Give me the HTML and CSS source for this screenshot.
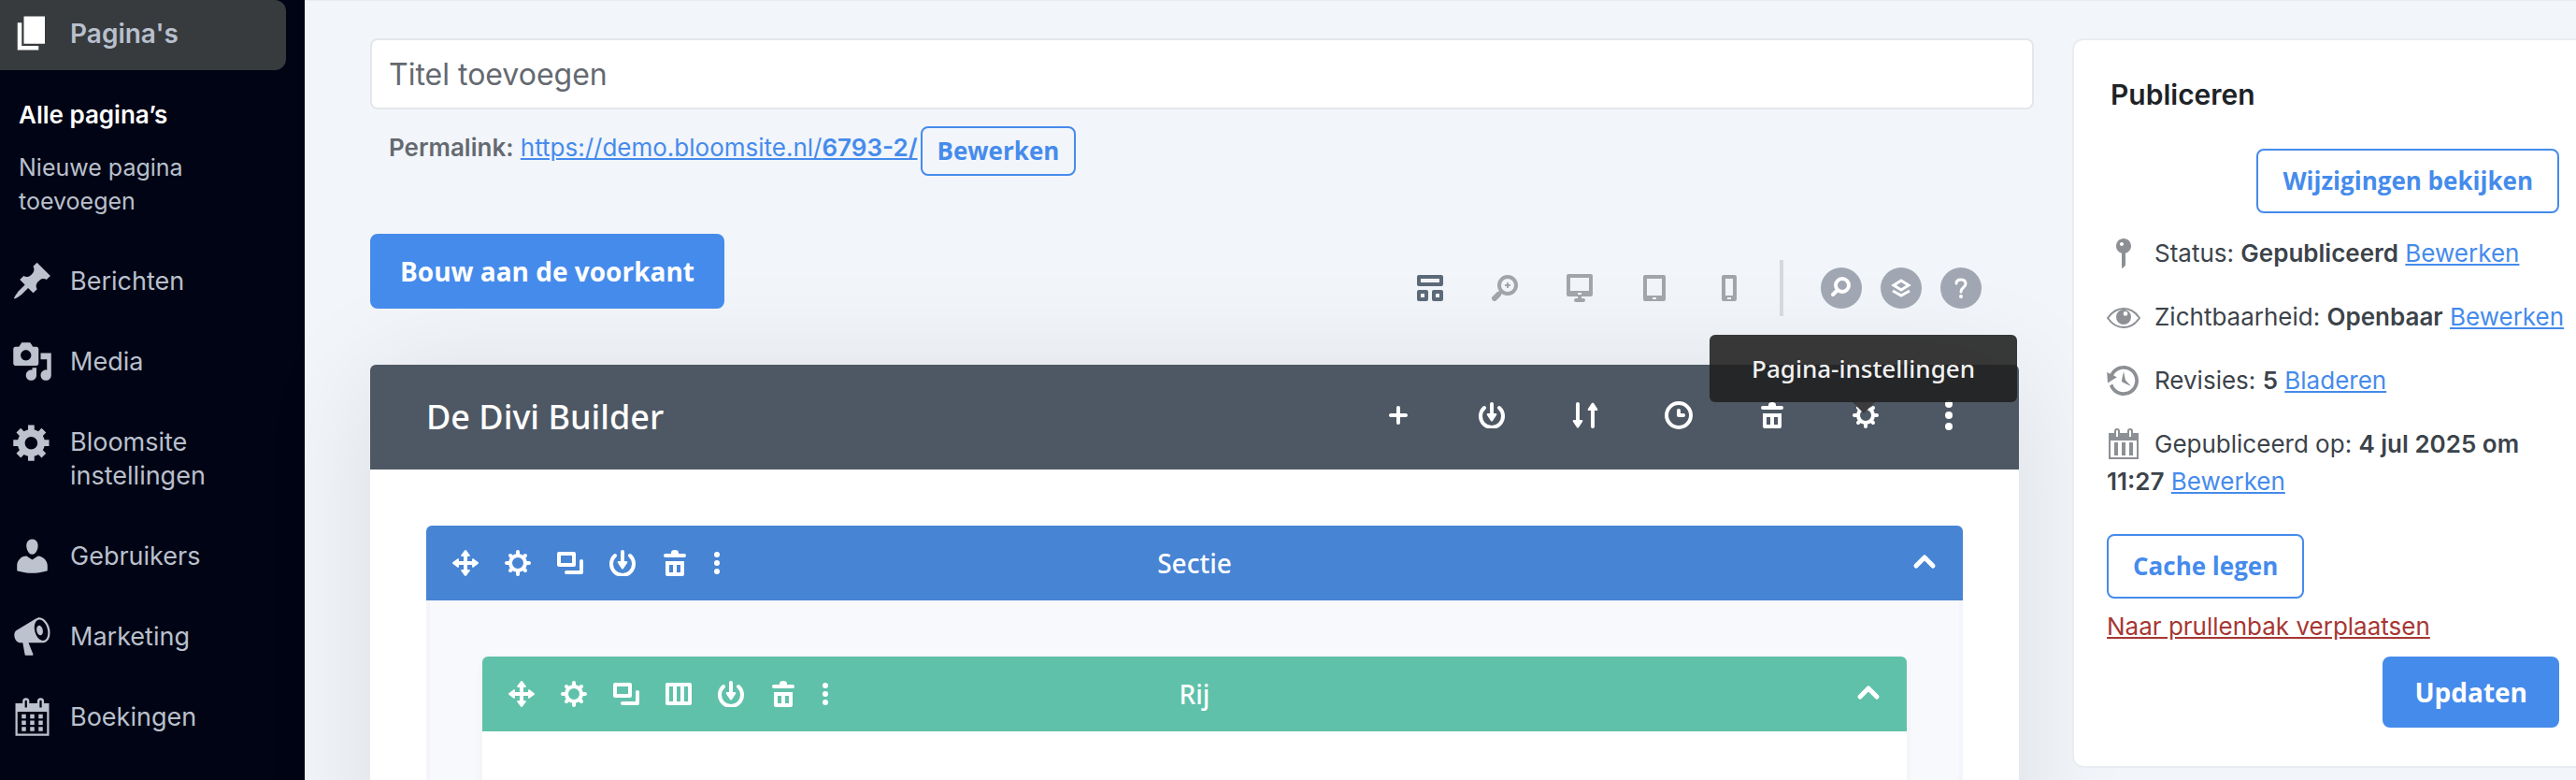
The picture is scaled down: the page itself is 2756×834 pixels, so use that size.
FILE: index.html
```
<!DOCTYPE html>
<html lang="nl">
<head>
    <meta charset="UTF-8">
    <meta name="viewport" content="width=device-width, initial-scale=1.0">
    <title>Pagina bewerken</title>
    <link rel="stylesheet" href="styles.css">
</head>
<body>
    <!-- Shared builder icons -->
    <svg class="sprite" aria-hidden="true">
        <symbol id="icon-move" viewBox="0 0 28 28">
            <path d="M14 5v18M5 14h18" fill="none" stroke="currentColor" stroke-width="4"/>
            <path d="M14 0q1 0 2 2l3 4q0 1-2 1h-6q-2 0-2-1l3-4q1-2 2-2zM14 28q1 0 2-2l3-4q0-1-2-1h-6q-2 0-2 1l3 4q1 2 2 2zM0 14q0-1 2-2l4-3q1 0 1 2v6q0 2-1 2l-4-3q-2-1-2-2zM28 14q0-1-2-2l-4-3q-1 0-1 2v6q0 2 1 2l4-3q2-1 2-2z" fill="currentColor"/>
        </symbol>
        <symbol id="icon-gear" viewBox="0 0 28 28">
            <g fill="none" stroke="currentColor" stroke-linecap="round">
                <circle cx="14" cy="14" r="8" stroke-width="4"/>
                <path d="M14 2v3M14 23v3M2 14h3M23 14h3M6 6l2 2M20 20l2 2M22 6l-2 2M8 20l-2 2" stroke-width="4"/>
            </g>
        </symbol>
        <symbol id="icon-copy" viewBox="0 0 28 28">
            <g fill="none" stroke="currentColor" stroke-width="4" stroke-linejoin="round" stroke-linecap="round">
                <path d="M2 4h16v12H2z"/>
                <path d="M26 12v12H10"/>
            </g>
        </symbol>
        <symbol id="icon-columns" viewBox="0 0 28 28">
            <path fill="currentColor" fill-rule="evenodd" d="M2 2h24q2 0 2 2v20q0 2-2 2H2q-2 0-2-2V4q0-2 2-2zM4 6v16h4V6zM12 6v16h4V6zM20 6v16h4V6z"/>
        </symbol>
        <symbol id="icon-save" viewBox="0 0 28 28">
            <path d="M6 6A12 12 0 1 0 22 6M14 2v11" fill="none" stroke="currentColor" stroke-width="4" stroke-linecap="round"/>
            <path d="M10 12h8q2 0 1 2l-4 6q-1 1-2 0l-4-6q-1-2 1-2z" fill="currentColor"/>
        </symbol>
        <symbol id="icon-trash" viewBox="0 0 28 28">
            <path fill="currentColor" d="M10 4V3q0-3 4-3t4 3v1h6q2 0 2 2t-2 2H4Q2 8 2 6t2-2z"/>
            <path fill="currentColor" fill-rule="evenodd" d="M4 12h20v14q0 2-2 2H6q-2 0-2-2zM8 16v8h4v-8zM16 16v8h4v-8z"/>
        </symbol>
        <symbol id="icon-dots" viewBox="0 0 8 32">
            <g fill="currentColor">
                <circle cx="4" cy="4" r="4"/>
                <circle cx="4" cy="16" r="4"/>
                <circle cx="4" cy="28" r="4"/>
            </g>
        </symbol>
        <symbol id="icon-up" viewBox="0 0 28 28">
            <path d="M6 17l9-9 9 9" fill="none" stroke="currentColor" stroke-width="5" stroke-linecap="round" stroke-linejoin="round"/>
        </symbol>
    </svg>

    <nav class="sidebar">
        <a class="menu-item active" href="#">
            <svg class="menu-icon" viewBox="0 0 20 20"><path d="M6 15V2h10v13H6zm-1 1h8v2H3V5h2v11z"/></svg>
            <span>Pagina's</span>
        </a>
        <div class="submenu">
            <a class="current" href="#">Alle pagina’s</a>
            <a href="#">Nieuwe pagina toevoegen</a>
        </div>
        <a class="menu-item" href="#">
            <svg class="menu-icon" viewBox="0 0 20 20"><path d="M10.44 3.02l1.82-1.82 6.36 6.35-1.83 1.82c-1.05-.68-2.48-.57-3.41.36l-.75.75c-.92.93-1.04 2.35-.35 3.41l-1.83 1.82-2.41-2.41-2.8 2.79c-.42.42-3.38 2.71-3.8 2.29s1.86-3.39 2.28-3.81l2.79-2.79L4.1 9.36l1.83-1.82c1.05.69 2.48.57 3.4-.36l.75-.75c.93-.92 1.05-2.35.36-3.41z"/></svg>
            <span>Berichten</span>
        </a>
        <a class="menu-item" href="#">
            <svg class="menu-icon" viewBox="0 0 20 20"><path d="M13 11V4c0-.55-.45-1-1-1h-1.67L9 1H5L3.67 3H2c-.55 0-1 .45-1 1v7c0 .55.45 1 1 1h10c.55 0 1-.45 1-1zM7 4.5c1.38 0 2.5 1.12 2.5 2.5S8.38 9.5 7 9.5 4.5 8.38 4.5 7 5.62 4.5 7 4.5zM14 6h5v10.5c0 1.38-1.12 2.5-2.5 2.5S14 17.88 14 16.5s1.12-2.5 2.5-2.5c.17 0 .34.02.5.05V9h-3V6zm-4 8.05V13h2v3.5c0 1.38-1.12 2.5-2.5 2.5S7 17.88 7 16.5 8.12 14 9.5 14c.17 0 .34.02.5.05z"/></svg>
            <span>Media</span>
        </a>
        <a class="menu-item" href="#">
            <svg class="menu-icon" viewBox="0 0 20 20"><path d="M18 12h-2.18c-.17.7-.44 1.35-.81 1.93l1.54 1.54-2.1 2.1-1.54-1.54c-.58.36-1.23.63-1.91.79V19H8v-2.18c-.68-.16-1.33-.43-1.91-.79l-1.54 1.54-2.12-2.12 1.54-1.54c-.36-.58-.63-1.23-.79-1.91H1V9.03h2.17c.16-.7.44-1.35.8-1.94L2.43 5.55l2.1-2.1 1.54 1.54c.58-.37 1.24-.64 1.93-.81V2h3v2.18c.68.16 1.33.43 1.91.79l1.54-1.54 2.12 2.12-1.54 1.54c.36.59.64 1.24.8 1.94H18V12zm-8.5 1.5c1.66 0 3-1.34 3-3s-1.34-3-3-3-3 1.34-3 3 1.34 3 3 3z"/></svg>
            <span>Bloomsite instellingen</span>
        </a>
        <a class="menu-item" href="#">
            <svg class="menu-icon" viewBox="0 0 20 20"><path d="M10 9.25c-2.27 0-2.73-3.44-2.73-3.44C7 4.02 7.82 2 9.97 2c2.16 0 2.98 2.02 2.71 3.81 0 0-.41 3.44-2.68 3.44zm0 2.57L12.72 10c2.39 0 4.52 2.33 4.52 4.53v2.49s-3.65 1.13-7.24 1.13c-3.65 0-7.24-1.13-7.24-1.13v-2.49c0-2.25 1.94-4.48 4.47-4.48z"/></svg>
            <span>Gebruikers</span>
        </a>
        <a class="menu-item" href="#">
            <svg class="menu-icon" viewBox="0 0 20 20"><path d="M18.15 5.94c.46 1.62.38 3.22-.02 4.48-.42 1.28-1.26 2.18-2.3 2.48-.16.06-.26.06-.4.06-.06.02-.12.02-.18.02-.06.02-.14.02-.22.02h-6.8l2.22 5.5c.02.14-.06.26-.14.34-.08.1-.24.16-.34.16H6.95c-.1 0-.26-.06-.34-.16-.08-.08-.16-.2-.14-.34l-1-5.5H4.25l-.02-.02c-.5.06-1.08-.18-1.54-.62s-.88-1.08-1.06-1.88c-.24-.8-.2-1.56-.02-2.2.18-.62.58-1.08 1.06-1.3l.02-.02 9-5.4c.1-.06.18-.1.24-.16.06-.04.14-.08.24-.12.16-.08.28-.12.5-.18 1.04-.3 2.24.1 3.22.98s1.84 2.24 2.26 3.86zm-2.58 5.98h-.02c.4-.1.74-.34 1.04-.7.58-.7.86-1.76.86-3.04 0-.64-.1-1.3-.28-1.98-.34-1.36-1.02-2.5-1.78-3.24s-1.68-1.1-2.46-.88c-.82.22-1.4.96-1.7 2-.32 1.04-.28 2.36.06 3.72.38 1.36 1 2.5 1.8 3.24.78.74 1.62 1.1 2.48.88zm-2.54-7.08c.22-.04.42-.02.62.04.38.16.76.48 1.02 1s.42 1.2.42 1.78c0 .3-.04.56-.12.8-.18.48-.44.84-.86.94-.34.1-.8-.06-1.14-.4s-.64-.86-.78-1.5c-.18-.62-.12-1.24.02-1.72s.48-.84.82-.94z"/></svg>
            <span>Marketing</span>
        </a>
        <a class="menu-item" href="#">
            <svg class="menu-icon" viewBox="0 0 20 20"><path fill-rule="evenodd" d="M2 3.5h3.4V2.6a1.6 1.6 0 0 1 3.2 0v.9h3.8V2.6a1.6 1.6 0 0 1 3.2 0v.9H18V19H2zM6.5 2.6v3h1v-3a.5.5 0 0 0-1 0zM13.5 2.6v3h1v-3a.5.5 0 0 0-1 0zM3 7.5V18h14V7.5z"/><path d="M5 8.8h2v2H5zM9 8.8h2v2H9zM13 8.8h2v2h-2zM5 11.8h2v2H5zM9 11.8h2v2H9zM13 11.8h2v2h-2zM5 14.8h2v2H5zM9 14.8h2v2H9zM13 14.8h2v2h-2z"/></svg>
            <span>Boekingen</span>
        </a>
    </nav>

    <main class="content">
        <div class="editor">
            <input class="title-input" type="text" aria-label="Titel toevoegen" placeholder="Titel toevoegen">

            <div class="permalink">
                <div class="permalink-text"><strong>Permalink:</strong> <a href="#">https://demo.bloomsite.nl/<strong>6793-2/</strong></a></div>
                <button class="button small" type="button">Bewerken</button>
            </div>

            <div class="toolbar">
                <button class="button primary large" type="button">Bouw aan de voorkant</button>
                <div class="tools">
                    <div class="views">
                        <button class="icon-button selected" type="button" aria-label="Wireframe">
                            <svg width="28" height="28" viewBox="0 0 28 28"><g fill="none" stroke="currentColor" stroke-width="4" stroke-linejoin="round"><path d="M2 2h24v8H2zM2 18h8v8H2zM18 18h8v8h-8z"/></g></svg>
                        </button>
                        <button class="icon-button" type="button" aria-label="Zoomen">
                            <svg width="28" height="28" viewBox="0 0 28 28"><g fill="none" stroke="currentColor"><circle cx="17" cy="11" r="9" stroke-width="4"/><path d="M10 18l-2 2" stroke-width="4"/><path d="M7 21l-4 4" stroke-width="6" stroke-linecap="round"/><path d="M17 8v6M14 11h6" stroke-width="2"/></g></svg>
                        </button>
                        <button class="icon-button" type="button" aria-label="Desktop">
                            <svg width="28" height="30" viewBox="0 0 28 30"><path fill="currentColor" fill-rule="evenodd" d="M2 0h24q2 0 2 2v20q0 2-2 2H16v2h2q2 0 2 2t-2 2h-8q-2 0-2-2t2-2h2v-2H2q-2 0-2-2V2q0-2 2-2zM4 4v14h20V4zM12 20v2h4v-2z"/></svg>
                        </button>
                        <button class="icon-button" type="button" aria-label="Tablet">
                            <svg width="28" height="28" viewBox="0 0 28 28"><path fill="currentColor" fill-rule="evenodd" d="M4 0h20q2 0 2 2v24q0 2-2 2H4q-2 0-2-2V2q0-2 2-2zM6 4v18h16V4zM12 24v2h4v-2z"/></svg>
                        </button>
                        <button class="icon-button" type="button" aria-label="Telefoon">
                            <svg width="28" height="28" viewBox="0 0 28 28"><path fill="currentColor" fill-rule="evenodd" d="M8 0h12q2 0 2 2v24q0 2-2 2H8q-2 0-2-2V2q0-2 2-2zM10 4v18h8V4zM12 24v2h4v-2z"/></svg>
                        </button>
                    </div>
                    <div class="help-buttons">
                        <button class="round-button" type="button" aria-label="Zoeken">
                            <svg width="44" height="44" viewBox="0 0 44 44"><g fill="none" stroke="currentColor" stroke-linecap="round"><circle cx="23" cy="19" r="7" stroke-width="4"/><path d="M17 25l-4 4" stroke-width="4"/></g></svg>
                        </button>
                        <button class="round-button" type="button" aria-label="Lagen">
                            <svg width="44" height="44" viewBox="0 0 44 44"><path d="M22 14l8 5-8 5-8-5zM13 25l9 5 9-5" fill="none" stroke="currentColor" stroke-width="3"/></svg>
                        </button>
                        <button class="round-button" type="button" aria-label="Help">
                            <svg width="44" height="44" viewBox="0 0 44 44"><path d="M17 17q0-4 5-4t5 4.5q0 2-2.5 4T22 26" fill="none" stroke="currentColor" stroke-width="3" stroke-linecap="round"/><circle cx="22" cy="31" r="2" fill="currentColor"/></svg>
                        </button>
                    </div>
                </div>
            </div>

            <section class="builder">
                <header class="builder-header">
                    <h1>De Divi Builder</h1>
                    <div class="builder-actions">
                        <button class="icon-button" type="button" aria-label="Toevoegen">
                            <svg width="30" height="30" viewBox="0 0 30 30"><path d="M15 7v16M7 15h16" fill="none" stroke="currentColor" stroke-width="4" stroke-linecap="round"/></svg>
                        </button>
                        <button class="icon-button" type="button" aria-label="Opslaan">
                            <svg class="icon"><use href="#icon-save"/></svg>
                        </button>
                        <button class="icon-button" type="button" aria-label="Overdraagbaarheid">
                            <svg width="30" height="30" viewBox="0 0 30 30"><path d="M7 3v18M23 27V9" fill="none" stroke="currentColor" stroke-width="4" stroke-linecap="round"/><path d="M3 20h8q2 0 1 2l-4 6q-1 1-2 0l-4-6q-1-2 1-2zM19 10h8q2 0 1-2l-4-6q-1-1-2 0l-4 6q-1 2 1 2z" fill="currentColor"/></svg>
                        </button>
                        <button class="icon-button" type="button" aria-label="Geschiedenis">
                            <svg width="30" height="30" viewBox="0 0 30 30"><g fill="none" stroke="currentColor" stroke-width="4" stroke-linecap="round"><circle cx="15" cy="15" r="13"/><path d="M15 10v5h5" stroke-linejoin="round"/></g></svg>
                        </button>
                        <button class="icon-button" type="button" aria-label="Wissen">
                            <svg class="icon"><use href="#icon-trash"/></svg>
                        </button>
                        <button class="icon-button has-tooltip" type="button">
                            <svg class="icon"><use href="#icon-gear"/></svg>
                            <span class="tooltip">Pagina-instellingen</span>
                        </button>
                        <button class="icon-button" type="button" aria-label="Meer">
                            <svg width="8" height="32"><use href="#icon-dots"/></svg>
                        </button>
                    </div>
                </header>
                <div class="builder-body">
                    <div class="block section">
                        <div class="block-header">
                            <div class="block-actions">
                                <button class="icon-button" type="button" aria-label="Verplaatsen"><svg class="icon"><use href="#icon-move"/></svg></button>
                                <button class="icon-button" type="button" aria-label="Instellingen"><svg class="icon"><use href="#icon-gear"/></svg></button>
                                <button class="icon-button" type="button" aria-label="Dupliceren"><svg class="icon"><use href="#icon-copy"/></svg></button>
                                <button class="icon-button" type="button" aria-label="Opslaan"><svg class="icon"><use href="#icon-save"/></svg></button>
                                <button class="icon-button" type="button" aria-label="Verwijderen"><svg class="icon"><use href="#icon-trash"/></svg></button>
                                <button class="icon-button" type="button" aria-label="Meer"><svg width="6" height="24"><use href="#icon-dots"/></svg></button>
                            </div>
                            <span class="block-title">Sectie</span>
                            <button class="icon-button toggle" type="button" aria-label="Inklappen"><svg class="icon"><use href="#icon-up"/></svg></button>
                        </div>
                        <div class="block-body">
                            <div class="block row">
                                <div class="block-header">
                                    <div class="block-actions">
                                        <button class="icon-button" type="button" aria-label="Verplaatsen"><svg class="icon"><use href="#icon-move"/></svg></button>
                                        <button class="icon-button" type="button" aria-label="Instellingen"><svg class="icon"><use href="#icon-gear"/></svg></button>
                                        <button class="icon-button" type="button" aria-label="Dupliceren"><svg class="icon"><use href="#icon-copy"/></svg></button>
                                        <button class="icon-button" type="button" aria-label="Kolommen"><svg class="icon"><use href="#icon-columns"/></svg></button>
                                        <button class="icon-button" type="button" aria-label="Opslaan"><svg class="icon"><use href="#icon-save"/></svg></button>
                                        <button class="icon-button" type="button" aria-label="Verwijderen"><svg class="icon"><use href="#icon-trash"/></svg></button>
                                        <button class="icon-button" type="button" aria-label="Meer"><svg width="6" height="24"><use href="#icon-dots"/></svg></button>
                                    </div>
                                    <span class="block-title">Rij</span>
                                    <button class="icon-button toggle" type="button" aria-label="Inklappen"><svg class="icon"><use href="#icon-up"/></svg></button>
                                </div>
                            </div>
                        </div>
                    </div>
                </div>
            </section>
        </div>

        <aside class="publish">
            <h2>Publiceren</h2>
            <button class="button preview" type="button">Wijzigingen bekijken</button>
            <div class="publish-rows">
                <div>
                    <svg class="publish-icon" viewBox="0 0 20 20"><path fill-rule="evenodd" d="M14 6c0 1.86-1.28 3.41-3 3.86V16c0 1-2 2-2 2V9.86c-1.72-.45-3-2-3-3.86 0-2.21 1.79-4 4-4s4 1.79 4 4zM8 5c0 .55.45 1 1 1s1-.45 1-1-.45-1-1-1-1 .45-1 1z"/></svg>Status: <strong>Gepubliceerd</strong> <a href="#">Bewerken</a>
                </div>
                <div>
                    <svg class="publish-icon" viewBox="0 0 20 20"><path d="M1.5 10.5Q5 5.5 10 5.5t8.5 5Q15 15.5 10 15.5T1.5 10.5z" fill="none" stroke="currentColor"/><path fill-rule="evenodd" d="M10 6a4 4 0 1 1 0 8 4 4 0 0 1 0-8zm1 1a1.2 1.2 0 1 0 0 2.4A1.2 1.2 0 0 0 11 7z"/></svg>Zichtbaarheid: <strong>Openbaar</strong> <a href="#">Bewerken</a>
                </div>
                <div>
                    <svg class="publish-icon" viewBox="0 0 20 20"><path d="M13.65 2.88c3.93 2.01 5.48 6.84 3.47 10.77s-6.83 5.48-10.77 3.47c-1.87-.96-3.2-2.56-3.86-4.4l1.64-1.03c.45 1.57 1.52 2.95 3.08 3.76 3.01 1.54 6.69.35 8.23-2.66 1.55-3.01.36-6.69-2.65-8.24C9.78 3.01 6.1 4.2 4.56 7.21l1.88.97-4.95 3.08-.39-5.82 1.78.91C4.9 2.4 9.75.89 13.65 2.88zm-4.36 7.83C9.11 10.53 9 10.28 9 10c0-.07.03-.12.04-.19h-.01L10 5l.97 4.81L14 13l-4.5-2.12.02-.02c-.08-.04-.16-.09-.23-.15z"/></svg>Revisies: <strong>5</strong> <a href="#">Bladeren</a>
                </div>
                <div>
                    <svg class="publish-icon" viewBox="0 0 20 20"><path fill-rule="evenodd" d="M2 4h3V3a1.5 1.5 0 0 1 3 0v1h4V3a1.5 1.5 0 0 1 3 0v1h3v14H2zM6 3v3h1V3a.5.5 0 0 0-1 0zM13 3v3h1V3a.5.5 0 0 0-1 0zM3 8v9h14V8z"/><path d="M5 9h2v7H5zM9 9h2v7H9zM13 9h2v7h-2z"/></svg>Gepubliceerd op: <strong>4 jul 2025 om 11:27</strong> <a href="#">Bewerken</a>
                </div>
            </div>
            <button class="button" type="button">Cache legen</button>
            <a class="trash-link" href="#">Naar prullenbak verplaatsen</a>
            <button class="button primary update" type="button">Updaten</button>
        </aside>
    </main>
</body>
</html>
```
FILE: styles.css
```
* {
    box-sizing: border-box;
}
body {
    margin: 0;
    height: 100vh;
    display: flex;
    overflow: hidden;
    background-color: #f2f5fa;
    color: #3c434a;
    font-family: Inter, sans-serif;
    font-size: 26px;
    line-height: 40px;
}
a {
    color: #458bec;
}
strong {
    font-weight: 600;
}
svg {
    display: block;
}
.sprite {
    position: absolute;
    width: 0;
    height: 0;
}

/* Sidebar */
.sidebar {
    width: 326px;
    flex-shrink: 0;
    background-color: #010414;
}
.menu-item {
    display: flex;
    gap: 18px;
    padding: 25px 60px 25px 12px;
    color: #b9c0cd;
    font-size: 27px;
    line-height: 36px;
    text-decoration: none;
}
.menu-item.active {
    margin-right: 20px;
    padding-top: 18px;
    padding-right: 40px;
    padding-bottom: 21px;
    border-radius: 0 12px 12px 0;
    background-color: #373b3e;
    font-size: 28px;
    font-weight: 600;
}
.menu-icon {
    width: 45px;
    height: 45px;
    margin: -5px 0 -4px;
    flex-shrink: 0;
    fill: #bcc2ce;
}
.menu-item.active .menu-icon {
    fill: #fff;
}
.submenu {
    padding: 20px 80px 15px 20px;
}
.submenu a {
    display: block;
    padding: 10px 0;
    color: #b9c0cd;
    font-size: 25px;
    line-height: 36px;
    text-decoration: none;
}
.submenu .current {
    color: #fff;
    font-size: 26px;
    font-weight: 600;
}

/* Content */
.content {
    flex: 1;
    min-width: 0;
    display: flex;
    align-items: flex-start;
    gap: 41px;
    padding: 40px 0 0 70px;
    border-top: 1px solid #e9ecf0;
}
.editor {
    flex: 1;
    min-width: 0;
}
.title-input {
    display: block;
    width: 100%;
    height: 76px;
    padding: 0 18px;
    border: 2px solid #e4e6ea;
    border-radius: 8px;
    background-color: #fff;
    font-family: inherit;
    font-size: 32px;
}
.title-input::placeholder {
    color: #646970;
}
.permalink {
    display: flex;
    align-items: flex-start;
    gap: 3px;
    margin: 18px 0 62px;
    padding-left: 20px;
    color: #646970;
}
.permalink-text {
    line-height: 46px;
}
.button {
    padding: 12px 26px;
    border: 2px solid #458bec;
    border-radius: 8px;
    background-color: transparent;
    color: #458bec;
    font-family: "Open Sans", sans-serif;
    font-size: 26px;
    font-weight: 700;
    line-height: 41px;
    cursor: pointer;
}
.button.small {
    padding: 6px 16px;
    line-height: 37px;
}
.button.primary {
    padding: 16px 32px;
    background-color: #458bec;
    color: #fff;
    font-size: 28px;
    line-height: 40px;
}
.button.large {
    padding: 18px 30px;
}
.icon-button {
    display: block;
    padding: 0;
    border: 0;
    background: none;
    color: inherit;
    cursor: pointer;
}
.icon {
    width: 28px;
    height: 28px;
}

/* Toolbar */
.toolbar {
    display: flex;
    justify-content: space-between;
    align-items: flex-start;
    padding-right: 56px;
    margin-bottom: 52px;
}
.tools {
    display: flex;
    margin-top: 28px;
}
.views {
    display: flex;
    align-items: center;
    gap: 52px;
    padding-right: 40px;
    border-right: 4px solid #d6d8da;
    height: 60px;
    color: #a1a5a9;
}
.views .selected {
    color: #5c6978;
}
.help-buttons {
    display: flex;
    align-items: center;
    gap: 20px;
    padding-left: 40px;
}
.round-button {
    width: 44px;
    height: 44px;
    padding: 0;
    border: 0;
    border-radius: 50%;
    background-color: #a0a7b2;
    color: #fff;
    cursor: pointer;
}

/* Builder */
.builder {
    margin-right: 16px;
    border-radius: 6px 6px 0 0;
    background-color: #fff;
    box-shadow: 0 10px 120px rgba(0, 0, 0, 0.1);
}
.builder-header {
    display: flex;
    justify-content: space-between;
    align-items: center;
    height: 112px;
    padding: 0 71px 4px 60px;
    border-radius: 6px 6px 0 0;
    background-color: #4e5864;
    color: #fff;
}
.builder-header h1 {
    margin: 4px 0 0;
    font-family: "Noto Sans", "Open Sans", sans-serif;
    font-size: 36px;
    font-weight: 500;
    line-height: 50px;
}
.builder-actions {
    display: flex;
    align-items: center;
    gap: 70px;
}
.builder-actions .icon {
    margin: 1px;
}
.has-tooltip {
    position: relative;
}
.tooltip {
    position: absolute;
    right: -147px;
    bottom: 29px;
    padding: 16px 45px;
    border-radius: 6px;
    background-color: rgba(33, 33, 33, 0.89);
    color: #f1f1f1;
    font-family: "Noto Sans", "Open Sans", sans-serif;
    font-size: 26px;
    font-weight: 500;
    line-height: 40px;
    white-space: nowrap;
}
.tooltip::after {
    content: "";
    position: absolute;
    top: 100%;
    left: 50%;
    margin-left: -12px;
    border: 12px solid transparent;
    border-top-color: #3b3b3c;
    border-bottom: 0;
}
.builder-body {
    padding: 60px;
}
.block-header {
    display: grid;
    grid-template-columns: 1fr auto 1fr;
    align-items: center;
    height: 80px;
    padding: 0 28px;
    border-radius: 6px 6px 0 0;
    color: #fff;
}
.block-actions {
    display: flex;
    align-items: center;
    gap: 28px;
}
.block-title {
    font-family: "Noto Sans", "Open Sans", sans-serif;
    font-size: 28px;
    font-weight: 500;
}
.toggle {
    justify-self: end;
}
.section > .block-header {
    background-color: #4784d4;
}
.section > .block-body {
    padding: 60px 56px;
    border: solid #f3f5fb;
    border-width: 0 4px;
    background-color: #f8f9fc;
}
.row {
    min-height: 200px;
    border-radius: 6px;
    background-color: #fff;
    box-shadow: 0 4px 12px rgba(0, 0, 0, 0.04);
}
.row > .block-header {
    background-color: #60c1aa;
}

/* Publish box */
.publish {
    position: relative;
    display: flex;
    flex-direction: column;
    align-items: flex-start;
    width: 539px;
    padding: 38px 10px 41px 35px;
    border: 2px solid #e9ecf0;
    border-right: 0;
    border-radius: 12px 0 0 12px;
    background-color: #fff;
}
.publish h2 {
    margin: 0 0 38px 4px;
    color: #1d2327;
    font-size: 30px;
    font-weight: 600;
    line-height: 40px;
}
.preview,
.update {
    align-self: flex-end;
    margin-right: 8px;
}
.publish-rows {
    display: flex;
    flex-direction: column;
    gap: 28px;
    margin: 23px 0 36px;
}
.publish-icon {
    display: inline-block;
    width: 40px;
    height: 40px;
    margin: 0 13px 0 -2px;
    vertical-align: top;
    fill: #8c8f94;
    color: #8c8f94;
}
.trash-link {
    margin: 10px 0 12px;
    color: #a73732;
}
```
